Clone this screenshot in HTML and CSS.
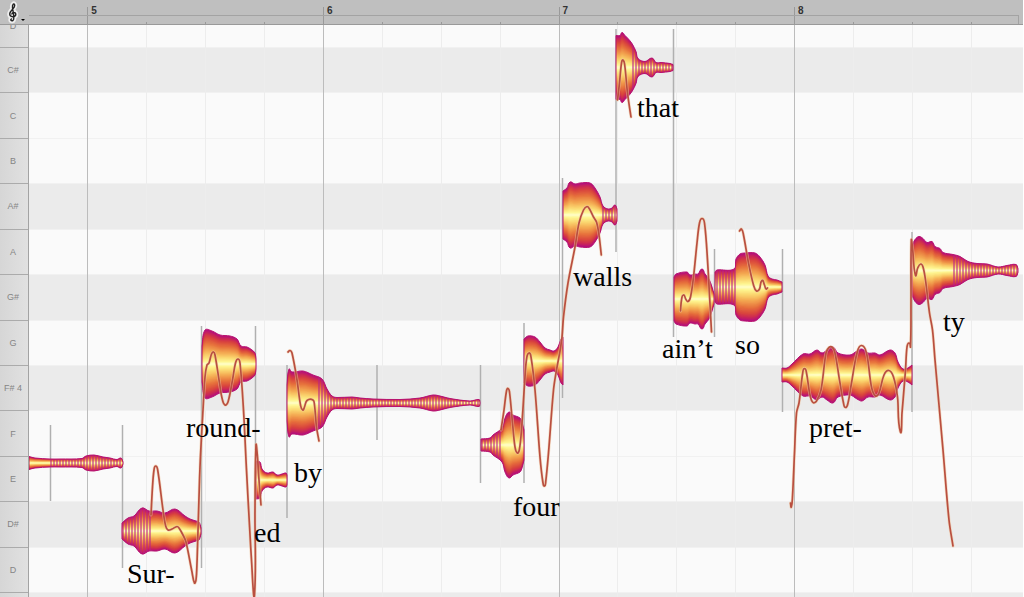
FILE: index.html
```
<!DOCTYPE html>
<html lang="en">
<head>
    <meta charset="UTF-8">
    <meta name="viewport" content="width=device-width, initial-scale=1.0">
    <title>Note Editor</title>
    <link rel="stylesheet" href="styles.css">
</head>
<body>
    <div class="header">
        <button class="clef" aria-label="Pitch ruler options">
            <svg width="24" height="24" viewBox="0 0 24 24">
                <g class="clef-halo">
                    <path d="M13 20.500C10 21.500 10.500 18.500 12 19M13 20.500C15 19 13.500 14 12.500 8C12 4 14.500 2.500 14.700 5.500C14.900 8.500 9.500 10.500 9.700 14C9.900 17.500 15.800 17.500 15.800 14.500C15.800 11.500 11.500 11.800 12 14.500"/>
                </g>
                <path class="clef-line" d="M13 20.500C10 21.500 10.500 18.500 12 19M13 20.500C15 19 13.500 14 12.500 8C12 4 14.500 2.500 14.700 5.500C14.900 8.500 9.500 10.500 9.700 14C9.900 17.500 15.800 17.500 15.800 14.500C15.800 11.500 11.500 11.800 12 14.500"/>
                <path d="M21 19h4l-2 2z"/>
            </svg>
        </button>
        <div class="ruler beats">
            <span></span>
            <span class="bar">5</span><span></span><span></span><span></span>
            <span class="bar">6</span><span></span><span></span><span></span>
            <span class="bar">7</span><span></span><span></span><span></span>
            <span class="bar">8</span><span></span><span></span><span></span>
        </div>
    </div>
    <div class="editor">
        <div class="keys">
            <div class="key first">D</div>
            <div class="key">C#</div>
            <div class="key">C</div>
            <div class="key">B</div>
            <div class="key">A#</div>
            <div class="key">A</div>
            <div class="key">G#</div>
            <div class="key">G</div>
            <div class="key">F# 4</div>
            <div class="key">F</div>
            <div class="key">E</div>
            <div class="key">D#</div>
            <div class="key">D</div>
            <div class="key last"></div>
        </div>
        <div class="roll">
            <div class="rows">
                <div class="row first"></div>
                <div class="row sharp"></div>
                <div class="row"></div>
                <div class="row"></div>
                <div class="row sharp"></div>
                <div class="row"></div>
                <div class="row sharp"></div>
                <div class="row"></div>
                <div class="row sharp"></div>
                <div class="row"></div>
                <div class="row"></div>
                <div class="row sharp"></div>
                <div class="row"></div>
                <div class="row sharp last"></div>
            </div>
            <div class="lines beats">
                <span></span>
                <span class="bar"></span><span></span><span></span><span></span>
                <span class="bar"></span><span></span><span></span><span></span>
                <span class="bar"></span><span></span><span></span><span></span>
                <span class="bar"></span><span></span><span></span><span></span>
            </div>
            <svg class="notes" id="notes" viewBox="29 25 994 572" preserveAspectRatio="none"></svg>
            <div class="lyrics" id="lyrics"></div>
        </div>
    </div>
    <script src="script.js"></script>
</body>
</html>
```

FILE: styles.css
```
* {
    margin: 0px;
    padding: 0px;
    box-sizing: border-box;
}
body{
    display: flex;
    flex-direction: column;
    height: 100vh;
    overflow: hidden;
    border-right: 1px solid #fff;
    font-family: "Liberation Sans", Arial, sans-serif;
    background: #fafafa;
}
.header{
    display: flex;
    height: 25px;
    background: #bfbfbf;
    border-bottom: 1px solid #999;
}
.clef{
    width: 28px;
    border: none;
    background: none;
    cursor: pointer;
}
.clef svg{
    display: block;
    overflow: visible;
}
.clef-halo{
    fill: none;
    stroke: #eee;
    stroke-width: 5;
    stroke-linecap: round;
}
.clef-line{
    fill: none;
    stroke: #222;
    stroke-width: 1.4;
}
.beats{
    display: grid;
    grid-template-columns: 583fr repeat(15, 589fr) 522fr;
}
.ruler{
    position: relative;
    flex: 1;
    margin-left: 1px;
    align-items: end;
}
.ruler::before{
    content: "";
    position: absolute;
    left: 0px;
    right: 4px;
    top: 15px;
    bottom: 0px;
    border: 1px solid #a3a3a3;
    border-left: none;
    border-bottom: none;
}
.ruler span{
    height: 2px;
    border-left: 1px solid #999;
}
.ruler span:first-child{
    border: none;
}
.ruler .bar{
    height: 17px;
    padding-left: 3px;
    font-size: 10px;
    line-height: 7px;
    font-weight: bold;
    color: #333;
}
.editor{
    display: flex;
    flex: 1;
    min-height: 0px;
}
.keys,
.rows{
    display: flex;
    flex-direction: column;
}
.keys{
    width: 29px;
    background: linear-gradient(to right, #d6d6d6, #e1e1e1);
    border-right: 1px solid #a3a3a3;
}
.key,
.row{
    display: flex;
    flex: 1;
    min-height: 0px;
    overflow: hidden;
}
.key{
    align-items: center;
    justify-content: center;
    padding-right: 2px;
    font-size: 9px;
    color: #858585;
    border-bottom: 1px solid #ababab;
}
.row{
    border-bottom: 1px solid #f1f1f1;
}
.sharp{
    background: #ebebeb;
}
.key.first,
.row.first{
    flex: 0 0 23px;
}
.key.first{
    align-items: flex-start;
    line-height: 2px;
}
.key.last,
.row.last{
    flex: 0 0 4px;
    border: none;
}
.roll{
    position: relative;
    flex: 1;
}
.rows,
.lines,
.notes,
.lyrics{
    position: absolute;
    inset: 0px;
    width: 100%;
    height: 100%;
}
.lines span{
    border-left: 1px solid #ededed;
}
.lines span:first-child{
    border: none;
}
.lines .bar{
    border-left: 1px solid #bcbcbc;
}
.separator{
    stroke: #b0b0b0;
    stroke-width: 1.5;
}
.stripe{
    stroke: #bc2486;
    stroke-width: 1.4;
    opacity: 0.8;
}
.pitch-halo,
.pitch{
    fill: none;
    stroke-linecap: round;
    stroke-linejoin: round;
}
.pitch-halo{
    stroke: #f0c8a0;
    stroke-width: 3;
    opacity: 0.6;
}
.pitch{
    stroke: #b94f40;
    stroke-width: 1.7;
}
.lyric{
    position: absolute;
    font-family: "Liberation Serif", Georgia, serif;
    font-size: 28px;
    line-height: 32px;
    color: #000;
    white-space: nowrap;
}
```

FILE: script.js
```
(function () {
    const view = {x: 29, y: 25, width: 994, height: 572};
    const svg = document.querySelector("#notes");

    // center line, outline as [x, half height], striped part from / to
    const notes = [
        {y: 463, shape: [[29,6.5],[35,5],[50,4],[60,4],[82,4.5],[86,7],[94,8],[103,6],[110,5],[117,3.5],[121,5],[123,1]], stripes: [51,122]},
        {y: 531, shape: [[122,8],[128,13],[134,15],[142,23],[149,20],[157,20],[165,18],[175,22],[185,15],[190,12],[196,10],[199,9],[201,3]], stripes: [123,151]},
        {y: 364, shape: [[202,18],[205,34],[212,33],[220,29],[230,28],[237,25],[241,18],[247,17],[252,14],[255,11],[256,5]]},
        {y: 480, shape: [[256,19],[260,18],[262,11],[267,7],[273,8],[277,5],[282,6],[286,7],[287,5]]},
        {y: 403, shape: [[287,18],[289,34],[292,31],[303,32],[313,28],[322,24],[327,14],[332,7],[337,5.5],[352,6],[360,5],[373,4],[400,3.5],[420,5],[433,8],[440,7],[450,4.5],[470,2],[479,3.5],[480,1]], stripes: [319,480]},
        {y: 445, shape: [[481,6],[490,7],[493,10],[502,17],[505,27],[509,33],[513,30],[520,27],[522,23],[524,15]], stripes: [482,503]},
        {y: 361, shape: [[524,22],[528,25],[535,24],[540,19],[545,13],[550,11],[554,10],[558,14],[561,22],[563,24]]},
        {y: 215, shape: [[563,24],[567,27],[570,33],[575,31],[580,32],[590,32],[595,27],[600,18],[603,9],[608,6],[612,7],[615,10],[617,6]], stripes: [603,617]},
        {y: 67.5, shape: [[616,32],[620,32],[622,35],[625,32],[628,29],[632,24],[636,16],[638,9],[645,6],[652,9.5],[656,5],[661,5],[670,4],[673,3]], stripes: [633,673]},
        {y: 299, shape: [[674,22],[676,25],[687,27],[690,24],[695,25],[698,25],[702,30],[705,25],[709,20],[712,12],[714,5]]},
        {y: 287, shape: [[715,15],[717,17],[734,18],[736,28],[740,33],[745,34],[755,34],[760,30],[765,22],[768,11],[772,8],[777,7],[782,5]], stripes: [717,737]},
        {y: 375, shape: [[782,7],[787,7],[792,11],[803,21],[810,21],[817,25],[822,22],[827,25],[833,28],[838,22],[850,20],[857,24],[862,26],[868,22],[875,22],[880,20],[890,25],[895,22],[898,13],[903,6],[908,7],[912,10]]},
        {y: 270.5, shape: [[912,25],[915,31],[919,34],[923,32],[927,28],[932,29],[935,24],[940,22],[943,18],[953,16],[960,14],[968,9],[977,7],[987,6.5],[998,3.5],[1007,5],[1016,6],[1018,2]], stripes: [954,1018]}
    ];

    const pitches = [
        [[151,515],[152.5,487],[154,470],[155.7,466],[157.7,470],[163,510],[165.7,526],[168,530],[172,529],[177,526.5],[179,528],[183,535],[186,542],[192,572],[194.5,583],[196,580],[197,563],[200,467],[203,410],[205,377],[207,365],[209,363],[211.5,354],[213.5,352],[215,355],[219.5,383],[222,398],[225,405],[228,402],[232.5,380],[235.5,363],[238,359],[240,363],[243.5,410],[246.5,470],[251.5,560],[254.5,595],[255,510],[256,445],[257.5,457],[259,480],[261,505]],
        [[288,352],[290,350.5],[292,353],[297,380],[300.5,405],[302.7,410],[304.5,407],[307,400.5],[313,400],[314.5,405],[316.5,427],[319,441]],
        [[501,430],[504,410],[506.5,391],[508,388.5],[509.5,392],[512.5,423],[515,447],[517.3,453],[519.3,450],[521.5,430],[525,377],[526.7,358],[529,353],[531,357],[535,390],[540,457],[543,483],[544.5,486],[545.7,482],[548.5,453],[553.5,390],[556.5,370],[560,351],[562,337],[563.5,317],[568,283],[575,247],[579,223],[583.5,210],[587,206.5],[589.5,209],[593.5,217],[596.5,222],[599,235],[601.3,255]],
        [[617.5,100],[619.5,83],[621.5,63],[623,60],[624.7,65],[627.5,93],[631,117]],
        [[680.5,311],[681.5,300],[683.5,295],[685.7,299],[688,301.5],[690.5,297],[693.5,277],[697,243],[699.5,223],[702,218.5],[704.5,223],[707.5,260],[711.5,332]],
        [[739.5,231],[741.5,229],[743.5,235],[748.5,263],[753.5,285],[756.5,291],[759.5,289],[762,280.5],[764.5,285],[766,289],[767.5,288]],
        [[790.5,503],[791.3,507],[792.5,497],[794.5,453],[796.5,413],[799,403],[802.7,373],[804.5,368.5],[806.5,373],[810,395],[813,402.5],[816.5,401],[821,390],[826,353],[829,347.5],[832.5,347.5],[835,353],[840,383],[843.5,403],[845.5,407.5],[848,403],[851.5,383],[857,353],[861.5,345.5],[866.5,353],[871.5,387],[875.5,396],[879,393],[884,375],[889,370.5],[893.5,377],[897.5,397],[900.3,431.5],[902,413],[905.5,370],[907,347],[909,343],[910.5,347],[911,300],[911.3,240],[912.7,250],[915.5,275.5],[917.7,268],[920.7,264],[923,267],[925.5,280],[929.5,313],[932.5,330],[935,360],[943,450],[949,520],[953,546]]
    ];

    // x, top, bottom
    const separators = [
        [50.5,425,501],[122.5,425,568],[201.5,326,568],[255.5,326,450],[287,365,518],
        [377,365,440],[480.5,365,483],[524,323,483],[562.5,178,398],[616,29,252],
        [673.5,29,337],[714.5,249,337],[782.5,249,412],[912,232,412]
    ];

    // text, left, baseline
    const lyrics = [
        ["Sur-",127,582],["round-",186,436],["ed",254,541],["by",294,481],["four",513,515],
        ["walls",573,285],["that",637,116],["ain\u2019t",662,357],["so",735,353],
        ["pret-",809,436],["ty",943,330]
    ];

    // edge to center
    const colors = [
        [1,180,15,125],[0.91,202,38,88],[0.8,216,66,62],[0.62,230,112,60],
        [0.42,243,166,80],[0.25,250,212,110],[0.1,254,246,145],[0,255,255,215]
    ];

    function colorAt(t){
        for (let i = 1; i < colors.length; i++){
            const a = colors[i - 1];
            const b = colors[i];
            if (t >= b[0]){
                const k = (a[0] - t) / (a[0] - b[0]);
                return "rgb(" + [1, 2, 3].map(n => Math.round(a[n] + (b[n] - a[n]) * k)).join(",") + ")";
            }
        }
    }

    function direction(a, b){
        const length = Math.hypot(b[0] - a[0], b[1] - a[1]) || 1;
        return [(b[0] - a[0]) / length, (b[1] - a[1]) / length];
    }

    // smooth curve, handles are a third of their own segment
    function curve(points){
        let d = "";
        for (let i = 0; i < points.length - 1; i++){
            const p1 = points[i];
            const p2 = points[i + 1];
            const from = direction(points[i - 1] || p1, p2);
            const to = direction(p1, points[i + 2] || p2);
            const handle = Math.hypot(p2[0] - p1[0], p2[1] - p1[1]) / 3;
            d += `C${p1[0] + from[0] * handle} ${p1[1] + from[1] * handle} ${p2[0] - to[0] * handle} ${p2[1] - to[1] * handle} ${p2[0]} ${p2[1]}`;
        }
        return d;
    }

    function outline(note, scale){
        const top = note.shape.map(p => [p[0], note.y - p[1] * scale]);
        const bottom = note.shape.map(p => [p[0], note.y + p[1] * scale]).reverse();
        return `M${top[0].join(" ")}${curve(top)}L${bottom[0].join(" ")}${curve(bottom)}Z`;
    }

    let html = "";
    separators.forEach(function (s){
        html += `<line class="separator" x1="${s[0]}" x2="${s[0]}" y1="${s[1]}" y2="${s[2]}"/>`;
    });
    notes.forEach(function (note, index){
        const steps = 28;
        for (let i = 0; i < steps; i++){
            const t = 1 - i / steps;
            html += `<path d="${outline(note, t)}" fill="${colorAt(t)}"/>`;
        }
        if (note.stripes){
            html += `<clipPath id="note-${index}"><path d="${outline(note, 1)}"/></clipPath><g clip-path="url(#note-${index})">`;
            for (let x = note.stripes[0]; x < note.stripes[1]; x += 3){
                html += `<line class="stripe" x1="${x}" x2="${x}" y1="${note.y - 40}" y2="${note.y + 40}"/>`;
            }
            html += "</g>";
        }
        html += `<path d="${outline(note, 1)}" fill="none" stroke="#b8146f"/>`;
    });
    pitches.forEach(function (points){
        const d = `M${points[0].join(" ")}${curve(points)}`;
        html += `<path class="pitch-halo" d="${d}"/><path class="pitch" d="${d}"/>`;
    });
    svg.innerHTML = html;

    document.querySelector("#lyrics").innerHTML = lyrics.map(function (l){
        const left = (l[1] - view.x) / view.width * 100;
        const top = (l[2] - 24 - view.y) / view.height * 100;
        return `<span class="lyric" style="left: ${left}%; top: ${top}%">${l[0]}</span>`;
    }).join("");
})();
```
